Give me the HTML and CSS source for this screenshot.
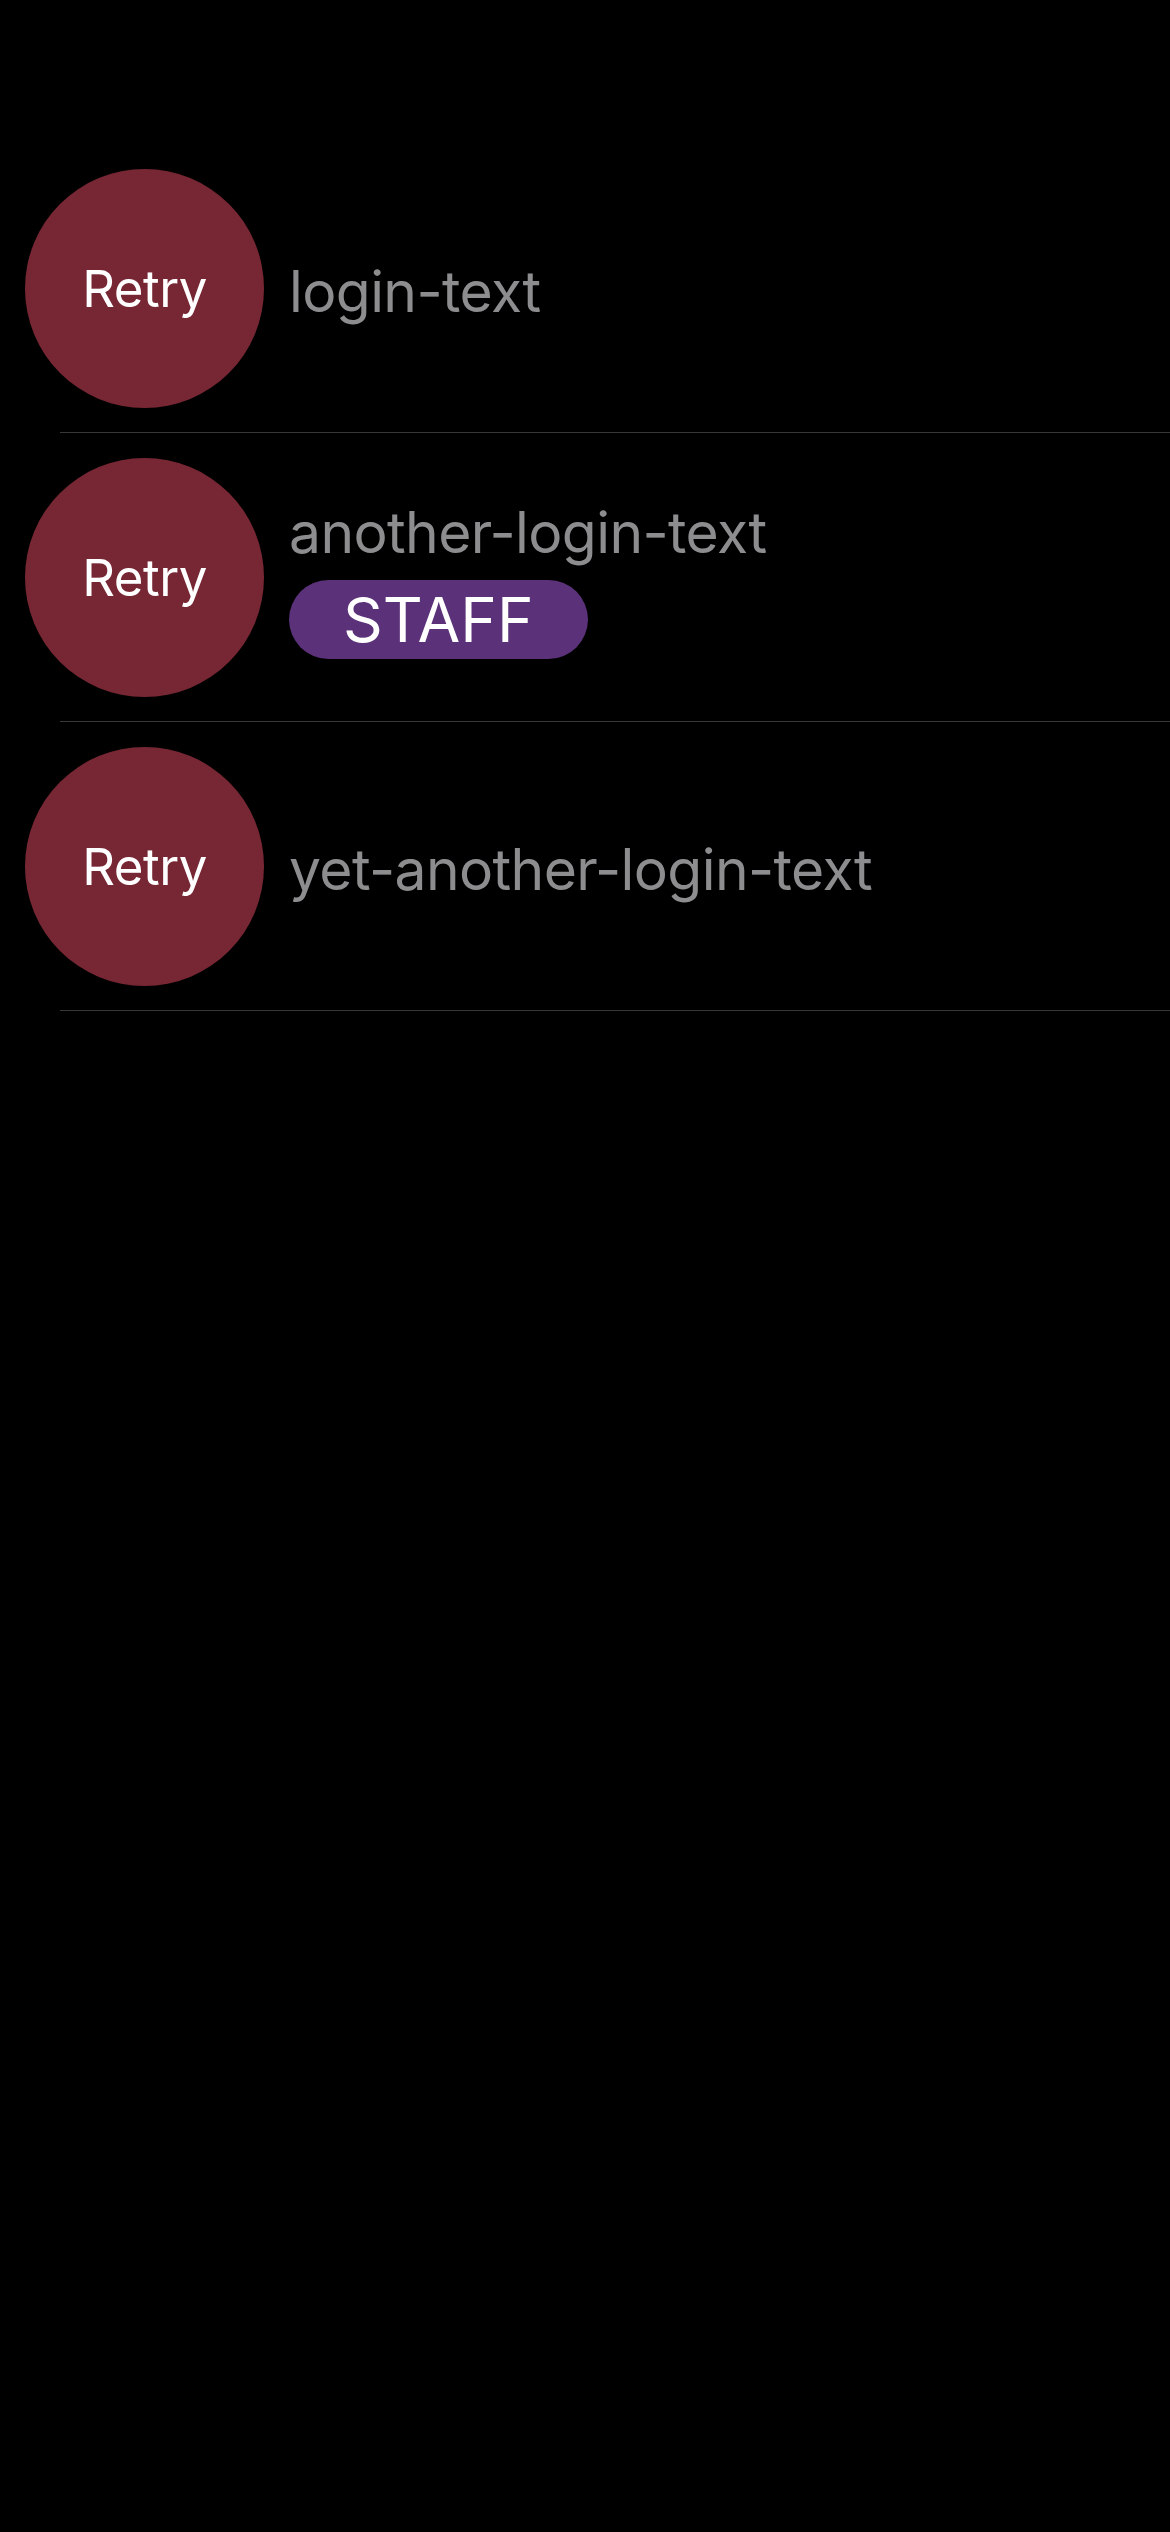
FILE: index.html
```html
<!DOCTYPE html>
<html lang="en">
<head>
<meta charset="utf-8">
<title>Logins</title>
<link rel="stylesheet" href="styles.css">
</head>
<body>
<main class="list">
  <div class="row">
    <div class="avatar">Retry</div>
    <div class="info">
      <div class="login">login-text</div>
    </div>
  </div>
  <div class="sep"></div>
  <div class="row">
    <div class="avatar">Retry</div>
    <div class="info">
      <div class="login">another-login-text</div>
      <div class="badge">STAFF</div>
    </div>
  </div>
  <div class="sep"></div>
  <div class="row">
    <div class="avatar">Retry</div>
    <div class="info">
      <div class="login">yet-another-login-text</div>
    </div>
  </div>
  <div class="sep"></div>
</main>
</body>
</html>
```
FILE: styles.css
```css
html, body {
  margin: 0;
  padding: 0;
  background: #000;
}
body {
  font-family: Inter, "Noto Sans", "Liberation Sans", sans-serif;
  width: 1170px;
  min-height: 2532px;
}
.list {
  padding-top: 144px;
}
.row {
  display: flex;
  align-items: center;
  padding: 25px 0 24px 25px;
}
.avatar {
  width: 239px;
  height: 239px;
  flex: none;
  border-radius: 50%;
  background: #772734;
  color: #fff;
  display: flex;
  align-items: center;
  justify-content: center;
  font-size: 51px;
  letter-spacing: -0.5px;
}
.info {
  margin-left: 25px;
  padding-top: 5px;
  display: flex;
  flex-direction: column;
  align-items: flex-start;
}
.login {
  color: #8d8d8f;
  font-size: 57px;
  line-height: 63px;
  letter-spacing: -0.6px;
}
.badge {
  margin-top: 16px;
  height: 79px;
  padding: 0 54px;
  border-radius: 40px;
  background: #5b3279;
  color: #fff;
  font-size: 62px;
  display: flex;
  align-items: center;
}
.sep {
  height: 1px;
  margin-left: 60px;
  background: #38383a;
}
```
